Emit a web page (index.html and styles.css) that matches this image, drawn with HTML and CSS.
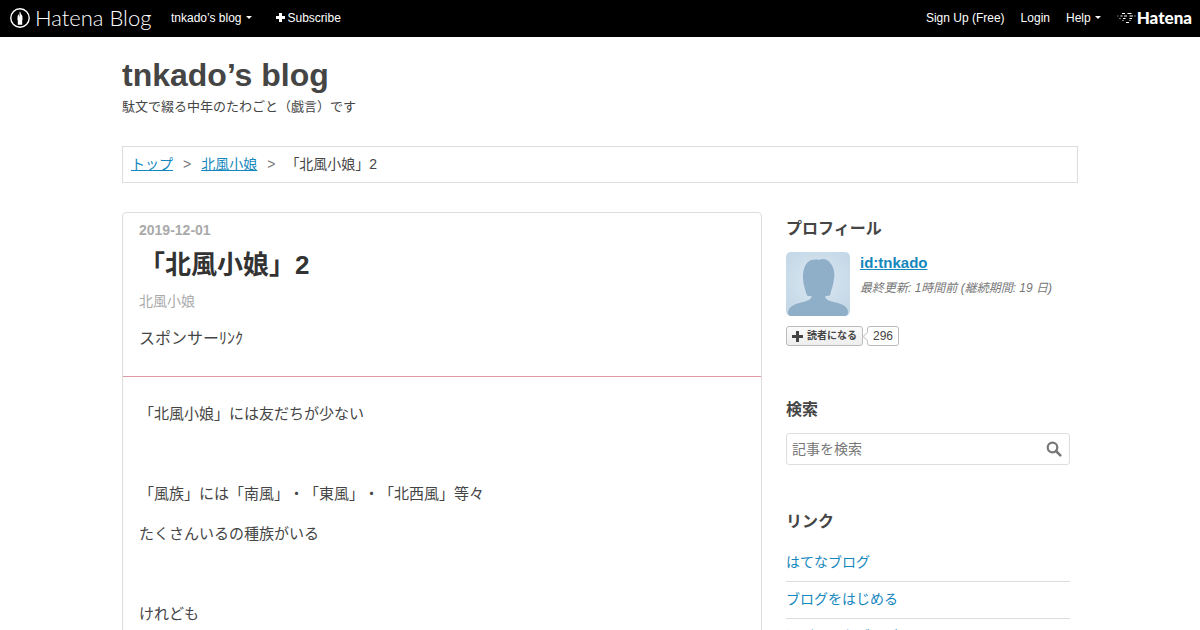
FILE: index.html
```html
<!DOCTYPE html>
<html lang="ja">
<head>
<meta charset="utf-8">
<meta name="viewport" content="width=device-width, initial-scale=1">
<title>「北風小娘」2 - tnkado’s blog</title>
<link rel="stylesheet" href="styles.css">
</head>
<body>
<header class="globalbar">
  <a class="logo" href="#">
    <svg class="logo-mark" viewBox="0 0 20 20" aria-hidden="true">
      <circle cx="10" cy="10" r="9.2" fill="none" stroke="#fff" stroke-width="1.4"/>
      <path d="M10 3.2 9 6 7.600 8v2.200l-.4.800.6 1v4.700h4.400V12l.6-1-.4-.8V8L11 6z" fill="#fff"/>
      <path d="M9.500 5v3.500" stroke="#000" stroke-width=".5"/>
    </svg>
    <span class="logo-text">Hatena Blog</span>
  </a>
  <nav class="nav-left">
    <a href="#">tnkado’s blog<span class="caret"></span></a>
    <a href="#"><svg class="plus" viewBox="0 0 9 9" aria-hidden="true"><path d="M3 0h3v3h3v3H6v3H3V6H0V3h3z" fill="currentColor"/></svg>Subscribe</a>
  </nav>
  <nav class="nav-right">
    <a href="#">Sign Up (Free)</a>
    <a href="#">Login</a>
    <a href="#">Help<span class="caret"></span></a>
    <a class="hatena" href="#">
      <svg class="hatena-mark" viewBox="0 0 19 12" aria-hidden="true">
        <g stroke="#fff" stroke-width="1.1" fill="none">
          <path d="M5 1.500h3M10.500 1.500h4M3.500 4h2M7 4h3M12.500 4h3.500M6 6.500h2.500M12.500 6.500h2.500M9 10.500h3"/>
          <path d="M0 4h1.500M2 6.500h2M17 4h2M5 8.500h2M12 8.500h2" opacity=".5"/>
        </g>
      </svg>
      <span>Hatena</span>
    </a>
  </nav>
</header>

<div class="container">
  <header class="blog-header">
    <h1><a href="#">tnkado’s blog</a></h1>
    <p>駄文で綴る中年のたわごと（戯言）です</p>
  </header>

  <nav class="breadcrumb">
    <a href="#">トップ</a><span class="sep">&gt;</span><a href="#">北風小娘</a><span class="sep">&gt;</span><span>「北風小娘」2</span>
  </nav>

  <div class="content">
    <main class="entry">
      <header class="entry-header">
        <a class="date" href="#"><time datetime="2019-12-01">2019-12-01</time></a>
        <h2><a href="#">「北風小娘」2</a></h2>
        <a class="category" href="#">北風小娘</a>
        <p class="sponsor">スポンサーﾘﾝｸ</p>
      </header>
      <div class="entry-body">
        <p>「北風小娘」には友だちが少ない</p>
        <p>&nbsp;</p>
        <p>「風族」には「南風」・「東風」・「北西風」等々</p>
        <p>たくさんいるの種族がいる</p>
        <p>&nbsp;</p>
        <p>けれども</p>
      </div>
    </main>

    <aside class="sidebar">
      <section class="module">
        <h3>プロフィール</h3>
        <div class="profile">
          <svg class="avatar" viewBox="0 0 64 64" role="img" aria-label="tnkado">
            <defs><radialGradient id="sky" cx=".5" cy=".45" r=".65"><stop offset="0" stop-color="#dbe7f1"/><stop offset="1" stop-color="#c3d7e6"/></radialGradient></defs>
            <rect width="64" height="64" fill="url(#sky)"/>
            <path d="M33 8c4-2 9-1 12 4 3 4 4 10 3 15-.5 6-3 11-4 16.500l-4 .5-1 1c1 2 3 3.500 7 4.500 8 2 16 4 16 10.500 0 2-1 4-1 4H3s-1-2-1-4c1-6 8-8.500 17-10.500 4-1 6-3 7-5l-5-1c-2-6-4-12-4-17.500 0-7 1-12 5-16 3-2.500 8-3 11-2z" fill="#8fafc9"/>
          </svg>
          <div class="profile-text">
            <a class="user" href="#">id:tnkado</a>
            <p class="updated">最終更新: 1時間前 (継続期間: 19 日)</p>
          </div>
        </div>
        <div class="subscribe">
          <button type="button"><svg viewBox="0 0 11 11" aria-hidden="true"><path d="M4 0h3v4h4v3H7v4H4V7H0V4h4z" fill="#444"/></svg>読者になる</button>
          <a class="count" href="#">296</a>
        </div>
      </section>

      <section class="module">
        <h3>検索</h3>
        <form class="search" role="search">
          <input type="text" aria-label="記事を検索" placeholder="記事を検索">
          <button type="button" aria-label="検索"><svg viewBox="0 0 16 16" aria-hidden="true"><circle cx="6.500" cy="6.500" r="4.800" fill="none" stroke="#777" stroke-width="2.200"/><path d="m10 10 4.300 4.300" stroke="#777" stroke-width="2.600" stroke-linecap="round"/></svg></button>
        </form>
      </section>

      <section class="module">
        <h3>リンク</h3>
        <ul class="links">
          <li><a href="#">はてなブログ</a></li>
          <li><a href="#">ブログをはじめる</a></li>
          <li><a href="#">週刊はてなブログ</a></li>
        </ul>
      </section>
    </aside>
  </div>
</div>
</body>
</html>
```

FILE: styles.css
```css
* { box-sizing: border-box; }

html {
  height: 100%;
  overflow: hidden;
}

body {
  margin: 0;
  height: 100%;
  overflow: hidden;
  background: #fff;
  color: #454545;
  font-family: "Liberation Sans", "Noto Sans CJK JP", sans-serif;
  font-size: 14px;
  line-height: 20px;
  text-spacing-trim: space-all;
}

h1, h2, h3, p, ul { margin: 0; padding: 0; }
a { color: #1487bd; }

.globalbar {
  display: flex;
  align-items: center;
  height: 37px;
  padding: 0 8px 2px 10px;
  background: #000;
  font-size: 12px;
}

.globalbar a {
  display: flex;
  align-items: center;
  color: #fff;
  text-decoration: none;
  white-space: nowrap;
}

.logo { width: 145px; gap: 5px; }
.logo-mark { width: 20px; height: 20px; flex: none; }
.logo-text { font: 300 22px/28px Lato, sans-serif; }

.nav-left, .nav-right { display: flex; }
.nav-left { gap: 24px; margin-left: 16px; }
.nav-right { gap: 16px; margin-left: auto; }

.caret {
  margin-left: 4px;
  border: 3px solid transparent;
  border-top-color: #fff;
  border-bottom: 0;
}

.plus { width: 9px; height: 9px; margin-right: 3px; }
.nav-right .hatena { gap: 1px; font: 900 17px/20px Lato, sans-serif; }
.hatena-mark { width: 19px; height: 12px; }

.container {
  max-width: 956px;
  margin: 0 auto;
}

.blog-header { padding-top: 18px; }
.blog-header h1 { font-size: 32px; line-height: 40px; }
.blog-header h1 a { color: inherit; text-decoration: none; }
.blog-header p { font-size: 13px; line-height: 24px; }

.breadcrumb {
  display: flex;
  margin-top: 27px;
  padding: 8px;
  border: 1px solid #ddd;
  line-height: 19px;
}

.sep { margin: 0 10px; color: #777; }

.content {
  display: grid;
  grid-template-columns: minmax(0, 1fr) 284px;
  gap: 24px;
  margin-top: 29px;
  padding-right: 8px;
}

.entry {
  border: 1px solid #ddd;
  border-radius: 4px;
}

.entry-header {
  padding: 7px 16px 24px;
  border-bottom: 1px solid #dc9aa5;
}

.entry-header a { display: block; text-decoration: none; }
.date { color: #aaa; font-weight: bold; }
.entry-header h2 { margin: 6px 0; font-size: 26px; line-height: 38px; }
.entry-header h2 a { color: #333; }
.category { color: #aaa; line-height: 22px; }
.sponsor { margin-top: 14px; font-size: 16px; line-height: 26px; }

.entry-body { padding: 24px 16px; font-size: 15px; }
.entry-body p { margin-bottom: 14px; line-height: 26px; }

.module { margin-bottom: 40px; }
.module h3 { padding: 5px 0 11px; font-size: 16px; line-height: 24px; }

.profile { display: flex; gap: 10px; }
.avatar { width: 64px; height: 64px; border-radius: 5px; flex: none; }
.user { font-size: 15px; font-weight: bold; line-height: 22px; }
.updated { margin-top: 4px; color: #777; font-size: 12px; font-style: italic; white-space: nowrap; }

.subscribe { display: flex; gap: 4px; margin-top: 10px; padding-bottom: 7px; }

.subscribe button {
  display: flex;
  align-items: center;
  gap: 4px;
  height: 20px;
  padding: 0 5px;
  border: 1px solid #bbb;
  border-radius: 3px;
  background: linear-gradient(#fafafa, #eee);
  color: #454545;
  font: bold 10px/18px "Liberation Sans", "Noto Sans CJK JP", sans-serif;
}

.subscribe svg { width: 11px; height: 11px; }

.count {
  position: relative;
  padding: 0 5px;
  border: 1px solid #bbb;
  border-radius: 3px;
  color: #454545;
  font-size: 12px;
  line-height: 18px;
  text-decoration: none;
}

.count::before {
  content: "";
  position: absolute;
  top: 6px;
  left: -4px;
  width: 6px;
  height: 6px;
  border: solid #ccc;
  border-width: 0 0 1px 1px;
  background: #fff;
  transform: rotate(45deg);
}

.search {
  display: flex;
  align-items: center;
  height: 32px;
  padding: 0 7px 0 5px;
  border: 1px solid #ddd;
  border-radius: 3px;
}

.search input {
  flex: 1;
  min-width: 0;
  padding: 0;
  border: 0;
  background: none;
  color: #454545;
  font: inherit;
}

.search input::placeholder { color: #777; }
.search button { display: flex; padding: 0; border: 0; background: none; }
.search svg { width: 16px; height: 16px; }

.links { list-style: none; }
.links li { padding: 7px 0 9px; border-bottom: 1px solid #ddd; }
.links a { text-decoration: none; }
```
